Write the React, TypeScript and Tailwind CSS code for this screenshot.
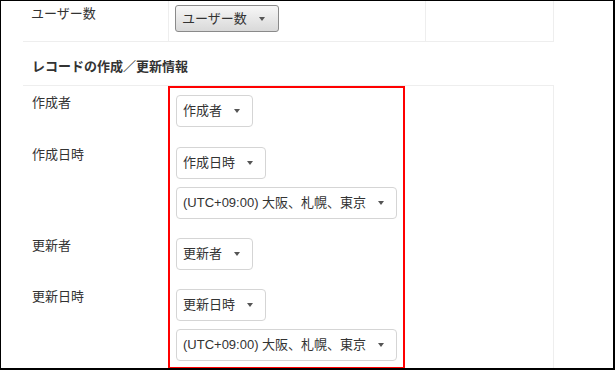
import React from 'react'

const font = { fontFamily: '"Liberation Sans", "Noto Sans CJK JP", sans-serif' }

function Caret() {
  return <span className="ml-3 inline-block h-0 w-0 border-x-[3px] border-t-[4px] border-x-transparent border-t-[#555]" />
}

function SelectButton({ label }: { label: string }) {
  return (
    <div className="inline-flex h-8 items-center self-start rounded-[4px] border border-[#d5d5d5] bg-white pl-[6px] pr-[12px] text-[13px] text-[#333]">
      <span className="whitespace-nowrap">{label}</span>
      <Caret />
    </div>
  )
}

const rows = [
  { label: '作成者', controls: ['作成者'], pt: 'pt-[9px]' },
  { label: '作成日時', controls: ['作成日時', '(UTC+09:00) 大阪、札幌、東京'], pt: 'pt-[20px]' },
  { label: '更新者', controls: ['更新者'], pt: 'pt-[19px]' },
  { label: '更新日時', controls: ['更新日時', '(UTC+09:00) 大阪、札幌、東京'], pt: 'pt-[19px]' },
]

export default function App() {
  return (
    <div
      className="relative h-[370px] w-[615px] overflow-hidden border-t border-l border-r-2 border-b-2 border-black bg-white text-[13px] text-[#333]"
      style={font}
    >
      {/* top row, cut off by the viewport */}
      <div className="ml-[22px] flex h-[41px] w-[531px] border-r border-b border-[#eee]">
        <div className="w-[145px] pl-[8px] pt-[5px] leading-4">ユーザー数</div>
        <div className="w-[257px] border-l border-[#eee] pl-[6px] pt-[4px]">
          <div className="inline-flex h-[27px] items-center rounded-[3px] border border-[#8a8a8a] bg-gradient-to-b from-[#f7f7f7] to-[#d9d9d9] pl-[6px] pr-[13px] text-[#333]">
            <span>ユーザー数</span>
            <Caret />
          </div>
        </div>
        <div className="flex-1 border-l border-[#eee]" />
      </div>

      <h2 className="ml-[31px] mt-[17px] h-[26px] text-[13px] font-bold leading-4">レコードの作成／更新情報</h2>

      {/* record info table */}
      <div className="ml-[22px] w-[531px] border-t border-r border-[#eee] pb-10">
        {rows.map((row) => (
          <div key={row.label} className={`flex ${row.pt}`}>
            <div className="w-[146px] pl-[9px] leading-4">{row.label}</div>
            <div className="flex flex-col gap-2 pl-[7px]">
              {row.controls.map((c) => (
                <SelectButton key={c} label={c} />
              ))}
            </div>
          </div>
        ))}
      </div>

      {/* annotation */}
      <div className="absolute left-[167px] top-[85px] h-[283px] w-[237px] border-2 border-[#ff0000]" />
    </div>
  )
}
